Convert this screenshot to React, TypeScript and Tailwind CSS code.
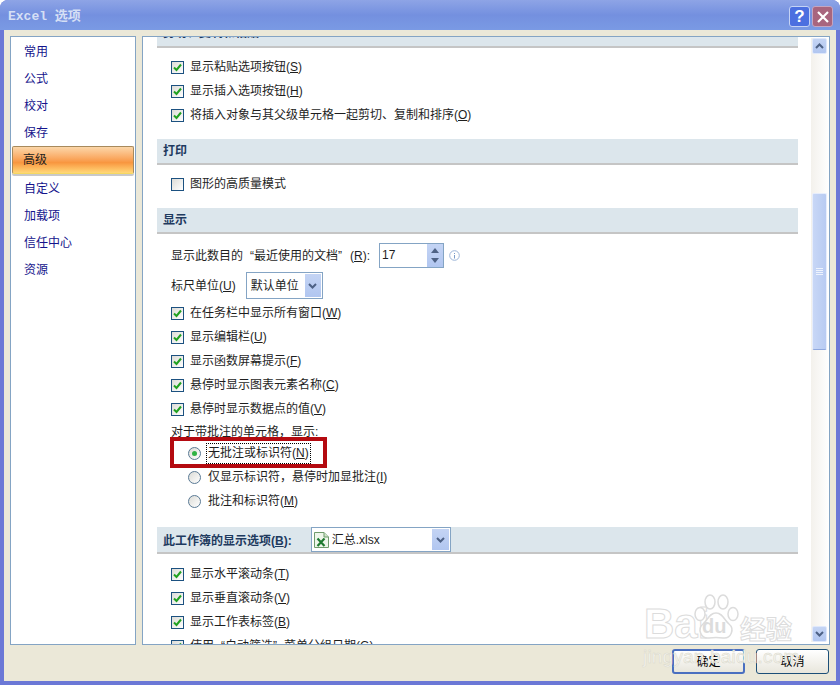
import type { ReactNode } from "react";

const ui = "font-['Liberation_Sans','Noto_Sans_CJK_SC',sans-serif]";

function Check({ checked = true }: { checked?: boolean }) {
  return (
    <span className="w-[13px] h-[13px] border border-[#1c5180] bg-gradient-to-br from-[#dcdcd7] to-white flex items-center justify-center shrink-0">
      {checked && (
        <svg width="9" height="9" viewBox="0 0 9 9">
          <path d="M1 4.5 L3.5 7 L8 1.5" fill="none" stroke="#21a121" strokeWidth="2" />
        </svg>
      )}
    </span>
  );
}

function Mnemonic({ k }: { k: string }) {
  return (
    <>
      (<span className="underline">{k}</span>)
    </>
  );
}

function CheckRow({ label, k, checked = true }: { label: ReactNode; k?: string; checked?: boolean }) {
  return (
    <div className="h-6 flex items-center gap-[6px] pl-[14px] text-[12px] text-[#1e1e1e] whitespace-nowrap">
      <Check checked={checked} />
      <span>
        {label}
        {k && <Mnemonic k={k} />}
      </span>
    </div>
  );
}

function Radio({ on = false }: { on?: boolean }) {
  return (
    <span className="w-[13px] h-[13px] rounded-full border border-[#5a7a95] bg-gradient-to-br from-[#dcdcd7] to-white flex items-center justify-center shrink-0">
      {on && <span className="w-[5px] h-[5px] rounded-full bg-[#2fb344]" />}
    </span>
  );
}

function SectionHead({ children }: { children: ReactNode }) {
  return (
    <div className="w-[641px] h-[26px] bg-[#dce6ec] border-b-2 border-[#c5c5c5] flex items-center pl-[6px] text-[12px] font-bold text-[#1e3a5f] whitespace-nowrap">
      {children}
    </div>
  );
}

function ScrollArrow({ d }: { d: string }) {
  return (
    <div className="h-[16px] w-[15px] bg-gradient-to-b from-[#c4d4f4] to-[#b1c6f0] border border-[#dfe8fb] rounded-[2px] flex items-center justify-center shrink-0">
      <svg width="9" height="6" viewBox="0 0 9 6">
        <path d={d} fill="none" stroke="#4d6185" strokeWidth="2" />
      </svg>
    </div>
  );
}

function ComboArrow({ className }: { className: string }) {
  return (
    <div className={`${className} bg-gradient-to-b from-[#c4d4f4] to-[#b1c6f0] flex items-center justify-center`}>
      <svg width="9" height="6" viewBox="0 0 9 6">
        <path d="M1 1 L4.5 4.5 L8 1" fill="none" stroke="#4d6185" strokeWidth="2" />
      </svg>
    </div>
  );
}

function Watermark() {
  return (
    <div className="absolute left-0 top-0 w-full h-full pointer-events-none overflow-hidden">
      <span className="absolute left-[644px] top-[603px] font-['Liberation_Sans',sans-serif] text-[42px] leading-[42px] font-bold text-transparent [-webkit-text-stroke:1px_#dcdcdc]">Bai</span>
      <svg className="absolute left-[693px] top-[594px]" width="46" height="47" viewBox="0 0 46 47">
        <g fill="#fff" stroke="#dcdcdc" strokeWidth="1.5">
          <ellipse cx="7" cy="20" rx="5" ry="6.5" />
          <ellipse cx="17" cy="8" rx="5" ry="7" />
          <ellipse cx="30" cy="8" rx="5" ry="7" />
          <ellipse cx="40" cy="20" rx="5" ry="6.5" />
          <path d="M23 19 C30 19 31 26 36 30 C42 35 38 45 30 44 C26 43.500 20 43.500 16 44 C8 45 4 35 10 30 C15 26 16 19 23 19Z" />
        </g>
      </svg>
      <span className="absolute left-[702px] top-[616px] font-['Liberation_Sans',sans-serif] text-[20px] leading-[20px] font-bold text-[#dcdcdc]">du</span>
      <span className="absolute left-[740px] top-[614px] font-['Noto_Sans_CJK_SC',sans-serif] text-[26px] leading-[28px] font-bold text-transparent [-webkit-text-stroke:1px_#dcdcdc]">经验</span>
      <span className="absolute left-[643px] top-[646px] font-['Liberation_Sans',sans-serif] text-[19px] leading-[22px] tracking-[0.2px] text-[#f6f5ee] [-webkit-text-stroke:0.5px_#d9d8cc]">jingyan.baidu.com</span>
    </div>
  );
}

const navItems = ["常用", "公式", "校对", "保存", "高级", "自定义", "加载项", "信任中心", "资源"];

export default function App() {
  return (
    <div className={`${ui} relative w-[840px] h-[685px] bg-[#6b78d6] rounded-t-[8px] flex flex-col overflow-hidden`}>
      <div className="h-[30px] shrink-0 bg-gradient-to-b from-[#8ea4e6] via-[#7490df] to-[#7a9ae4] flex items-center justify-between pt-[3px] pl-2 pr-[7px]">
        <span className="font-['Liberation_Mono','Noto_Sans_CJK_SC',monospace] font-bold text-[13px] text-[#d5dff5]">Excel 选项</span>
        <div className="flex gap-[2px]">
          <div className="w-[21px] h-[21px] rounded-[3px] border border-[#c5d3f5] bg-[#4b6fe0] flex items-center justify-center text-white font-bold text-[17px]">?</div>
          <div className="w-[21px] h-[21px] rounded-[3px] border border-[#c5a5c0] bg-[#a8657e] flex items-center justify-center">
            <svg width="12" height="12" viewBox="0 0 12 12">
              <path d="M1 1 L11 11 M11 1 L1 11" stroke="#fff" strokeWidth="2.2" />
            </svg>
          </div>
        </div>
      </div>

      <div className="flex-1 mx-[4px] mb-[4px] bg-[#ebe8d8] flex flex-col pt-[6px] px-[6px] min-h-0">
        <div className="h-[609px] flex gap-[6px] shrink-0">
          <nav className="w-[126px] bg-white border border-[#84a4c4] pt-[1px] px-[1px] text-[12px] text-[#14148c]">
            {navItems.map((item) =>
              item === "高级" ? (
                <div key={item} className="h-[28px] mb-[1px] rounded-[2px] border border-[#a88a5c] border-b-[#f5d860] bg-gradient-to-b from-[#fbd6a8] via-[#f8963f] via-60% to-[#ffd878] flex items-center pl-[10px] text-[#1e1e1e] shadow-[0_2px_0_#c9c9c9]">
                  {item}
                </div>
              ) : (
                <div key={item} className="h-[27px] flex items-center pl-[12px]">
                  {item}
                </div>
              )
            )}
          </nav>

          <div className="flex-1 bg-white border border-[#84a4c4] flex overflow-hidden relative">
            <div className="w-[656px] pl-[14px] shrink-0 h-full overflow-hidden">
              <div className="w-[641px] h-[11px] bg-[#dce6ec] border-b-2 border-[#c5c5c5] overflow-hidden pl-[6px] text-[12px] font-bold text-[#1e3a5f]">
                <div className="-mt-[12px] leading-[16px]">剪切、复制和粘贴</div>
              </div>
              <div className="pt-[7px] pb-[12px]">
                <CheckRow label="显示粘贴选项按钮" k="S" />
                <CheckRow label="显示插入选项按钮" k="H" />
                <CheckRow label="将插入对象与其父级单元格一起剪切、复制和排序" k="O" />
              </div>
              <SectionHead>打印</SectionHead>
              <div className="pt-[7px] pb-[12px]">
                <CheckRow label="图形的高质量模式" checked={false} />
              </div>
              <SectionHead>显示</SectionHead>
              <div className="pt-[9px] pl-[14px] text-[12px] text-[#1e1e1e] whitespace-nowrap">
                <div className="h-[25px] flex items-center">
                  <span>显示此数目的<span className="ml-[7px]">“</span>最近使用的文档<span className="mr-[8px]">”</span>(<span className="underline">R</span>):</span>
                  <div className="ml-[9px] w-[65px] h-[25px] border border-[#84a4c4] flex items-start justify-between pl-[2px] pt-[2px] text-[12px]">
                    17
                    <div className="w-[16px] h-[23px] -mt-[2px] bg-gradient-to-b from-[#c4d4f4] to-[#b1c6f0] flex flex-col items-center justify-around py-[2px]">
                      <svg width="8" height="5" viewBox="0 0 8 5"><path d="M0 5 L4 0 L8 5Z" fill="#4d6185" /></svg>
                      <svg width="8" height="5" viewBox="0 0 8 5"><path d="M0 0 L4 5 L8 0Z" fill="#4d6185" /></svg>
                    </div>
                  </div>
                  <svg className="ml-[5px]" width="11" height="11" viewBox="0 0 11 11">
                    <circle cx="5.5" cy="5.5" r="4.8" fill="none" stroke="#9db5d8" />
                    <path d="M5.5 3 V4 M5.5 5 V8.5" stroke="#7a9bc8" />
                  </svg>
                </div>
                <div className="h-[27px] mt-[4px] flex items-center">
                  <span>标尺单位(<span className="underline">U</span>)</span>
                  <div className="ml-[10px] w-[77px] h-[27px] border border-[#84a4c4] flex items-center justify-between pl-[4px] pr-[1px]">
                    默认单位
                    <ComboArrow className="w-[16px] h-[23px]" />
                  </div>
                </div>
              </div>
              <div className="pt-[2px]">
                <CheckRow label="在任务栏中显示所有窗口" k="W" />
                <CheckRow label="显示编辑栏" k="U" />
                <CheckRow label="显示函数屏幕提示" k="F" />
                <CheckRow label="悬停时显示图表元素名称" k="C" />
                <CheckRow label="悬停时显示数据点的值" k="V" />
              </div>
              <div className="mt-[3px] pl-[14px] h-[16px] flex items-center text-[12px] text-[#1e1e1e]">对于带批注的单元格，显示:</div>
              <div className="mt-[1px] pl-[31px] text-[12px] text-[#1e1e1e] whitespace-nowrap">
                <div className="h-6 flex items-center gap-[6px]">
                  <Radio on />
                  <span className="outline-1 outline-dotted outline-black px-[1px] leading-[19px]">无批注或标识符<Mnemonic k="N" /></span>
                </div>
                <div className="h-6 flex items-center gap-[7px]">
                  <Radio />
                  <span>仅显示标识符，悬停时加显批注<Mnemonic k="I" /></span>
                </div>
                <div className="h-6 flex items-center gap-[7px]">
                  <Radio />
                  <span>批注和标识符<Mnemonic k="M" /></span>
                </div>
              </div>
              <div className="mt-[14px] w-[641px] h-[27px] bg-[#dce6ec] border-b-2 border-[#c5c5c5] flex items-center pl-[6px] text-[12px] font-bold text-[#1e3a5f] whitespace-nowrap">
                <span className="mt-[2px]">此工作簿的显示选项(<span className="underline">B</span>):</span>
                <div className="ml-[19px] w-[140px] h-[25px] bg-white border border-[#84a4c4] flex items-center justify-between pl-[1px] pr-[1px] font-normal text-[#1e1e1e]">
                  <span className="flex items-center gap-[2px]">
                    <svg width="17" height="18" viewBox="0 0 17 18">
                      <path d="M1.500 1.500 H11 L15.500 6 V16.500 H1.500Z" fill="#eef6ea" stroke="#6f9b6c" />
                      <path d="M11 1.500 V6 H15.500" fill="#cfe3c9" stroke="#6f9b6c" />
                      <path d="M4.500 7.500 L11.500 15 M11.500 7.500 L4.500 15" stroke="#1f7a30" strokeWidth="2.2" />
                    </svg>
                    汇总.xlsx
                  </span>
                  <ComboArrow className="w-[17px] h-[21px]" />
                </div>
              </div>
              <div className="pt-[8px]">
                <CheckRow label="显示水平滚动条" k="T" />
                <CheckRow label="显示垂直滚动条" k="V" />
                <CheckRow label="显示工作表标签" k="B" />
                <CheckRow label={<>使用<span className="ml-[7px]">“</span>自动筛选<span className="mr-[7px]">”</span>菜单分组日期</>} k="G" />
              </div>
            </div>
            <div className="flex-1 flex justify-end pr-[1px] pt-[1px] pb-[2px]">
              <div className="w-[17px] bg-gradient-to-r from-[#f3f1ec] to-[#fefefe] flex flex-col items-center gap-[1px]">
                <ScrollArrow d="M1 5 L4.5 1.5 L8 5" />
                <div className="h-[137px]" />
                <div className="w-[15px] h-[157px] rounded-[2px] bg-gradient-to-r from-[#c8d7f6] to-[#b8cbf2] border border-[#e6edfc] border-b-[#8fa8de] flex flex-col items-center justify-center gap-[1px]">
                  <span className="w-[7px] h-px bg-[#eef3fd]" />
                  <span className="w-[7px] h-px bg-[#eef3fd]" />
                  <span className="w-[7px] h-px bg-[#eef3fd]" />
                  <span className="w-[7px] h-px bg-[#eef3fd]" />
                </div>
                <div className="flex-1" />
                <ScrollArrow d="M1 1 L4.5 4.5 L8 1" />
              </div>
            </div>
            <div className="absolute left-[27px] top-[400px] w-[157px] h-[31px] border-[4px] border-[#b40a10] pointer-events-none" />
          </div>
        </div>

        <div className="flex-1 flex justify-end items-start gap-[11px] pt-[4px] pr-[1px] text-[12px] text-black">
          <div className="w-[73px] h-[25px] rounded-[3px] border-2 border-[#4a6fc0] bg-gradient-to-b from-white to-[#e8e6dc] flex items-center justify-center">确定</div>
          <div className="w-[73px] h-[25px] rounded-[3px] border border-[#1c4f78] bg-gradient-to-b from-white to-[#e8e6dc] flex items-center justify-center">取消</div>
        </div>
      </div>
      <Watermark />
    </div>
  );
}
